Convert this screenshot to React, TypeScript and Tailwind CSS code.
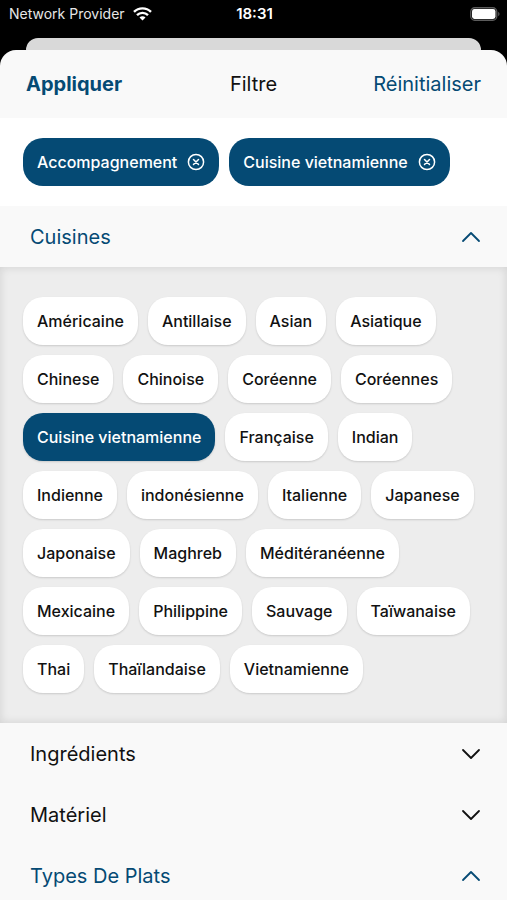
import { useState } from "react";
import clsx from "clsx";

const cuisines = [
  "Américaine", "Antillaise", "Asian", "Asiatique",
  "Chinese", "Chinoise", "Coréenne", "Coréennes",
  "Cuisine vietnamienne", "Française", "Indian",
  "Indienne", "indonésienne", "Italienne", "Japanese",
  "Japonaise", "Maghreb", "Méditéranéenne",
  "Mexicaine", "Philippine", "Sauvage", "Taïwanaise",
  "Thai", "Thaïlandaise", "Vietnamienne",
];

const sections: { title: string; items: string[] }[] = [
  { title: "Cuisines", items: cuisines },
  { title: "Ingrédients", items: [] },
  { title: "Matériel", items: [] },
  { title: "Types De Plats", items: [] },
];

const defaultFilters = ["Accompagnement", "Cuisine vietnamienne"];

function WifiIcon() {
  return (
    <svg width="19" height="14" viewBox="0 0 19 14" fill="none" stroke="white" strokeWidth="2.4" aria-hidden="true">
      <path d="M1 4.9a12 12 0 0 1 17 0" />
      <path d="M4 8.1a7.8 7.8 0 0 1 11 0" />
      <path d="M9.5 13.4 6.5 10.4a4.2 4.2 0 0 1 6 0Z" fill="white" stroke="none" />
    </svg>
  );
}

function BatteryIcon() {
  return (
    <svg width="30" height="14" viewBox="0 0 30 14" aria-hidden="true">
      <rect x="0.75" y="0.75" width="26" height="12.5" rx="4" fill="none" stroke="#5c5c5c" strokeWidth="1.3" />
      <rect x="2" y="2" width="23.5" height="10" rx="2.4" fill="white" />
      <path d="M28.2 4.8c1.8.7 1.8 3.7 0 4.4Z" fill="#5c5c5c" />
    </svg>
  );
}

function CloseIcon() {
  return (
    <svg width="18" height="18" viewBox="0 0 18 18" fill="none" stroke="currentColor" strokeWidth="1.5" strokeLinecap="round" aria-hidden="true">
      <circle cx="9" cy="9" r="7.6" />
      <path d="m6.5 6.5 5 5m0-5-5 5" />
    </svg>
  );
}

function Chevron({ open }: { open: boolean }) {
  return (
    <svg width="20" height="12" viewBox="0 0 20 12" fill="none" stroke="currentColor" strokeWidth="1.8" strokeLinecap="round" strokeLinejoin="round" aria-hidden="true">
      <path d={open ? "m2 10 8-8 8 8" : "m2 2 8 8 8-8"} />
    </svg>
  );
}

export default function App() {
  const [filters, setFilters] = useState<string[]>(defaultFilters);
  const [openSections, setOpenSections] = useState<string[]>(["Cuisines", "Types De Plats"]);

  function toggleFilter(name: string) {
    setFilters((prev) => (prev.includes(name) ? prev.filter((f) => f !== name) : [...prev, name]));
  }

  function toggleSection(title: string) {
    setOpenSections((prev) => (prev.includes(title) ? prev.filter((s) => s !== title) : [...prev, title]));
  }

  return (
    <div className="flex h-screen flex-col overflow-hidden bg-black font-['Inter',sans-serif] text-[#111111]">
      <div className="grid h-[38px] shrink-0 grid-cols-3 items-start pt-1 pr-[7px] pl-[9px] leading-5 text-white">
        <div className="flex h-5 items-center gap-2 text-sm whitespace-nowrap text-[#e6e6e6]">
          Network Provider
          <WifiIcon />
        </div>
        <div className="text-center text-[15px] font-semibold">18:31</div>
        <div className="flex h-5 items-center justify-end">
          <BatteryIcon />
        </div>
      </div>
      {/* card peeking out behind the sheet */}
      <div className="mx-[26px] h-3 shrink-0 rounded-t-xl bg-[#d9d9d9]" />

      <main className="min-h-0 flex-1 overflow-hidden rounded-t-2xl bg-[#f9f9f9]">
        <header className="grid h-[68px] grid-cols-[1fr_auto_1fr] items-center px-[26px] text-xl">
          <button className="justify-self-start font-bold text-[#054a74]">Appliquer</button>
          <h1>Filtre</h1>
          <button className="justify-self-end text-[#054a74]" onClick={() => setFilters([])}>Réinitialiser</button>
        </header>

        <div className="flex flex-wrap gap-2.5 bg-white py-5 pr-4 pl-[23px]">
          {filters.map((name) => (
            <button
              key={name}
              onClick={() => toggleFilter(name)}
              className="flex h-12 items-center gap-2.5 rounded-[20px] bg-[#054a74] px-3.5 text-base font-medium text-white"
            >
              {name}
              <CloseIcon />
            </button>
          ))}
        </div>

        {sections.map(({ title, items }) => {
          const open = openSections.includes(title);
          return (
            <section key={title}>
              <h2>
                <button
                  onClick={() => toggleSection(title)}
                  aria-expanded={open}
                  className={clsx("flex h-[61px] w-full items-center justify-between pr-[26px] pl-[30px] text-xl", open && "text-[#054a74]")}
                >
                  {title}
                  <Chevron open={open} />
                </button>
              </h2>
              {open && items.length > 0 && (
                <div className="flex flex-wrap gap-2.5 bg-[#ededed] py-[30px] pr-4 pl-[23px] shadow-[inset_0_0_10px_rgba(0,0,0,0.12)]">
                  {items.map((name) => (
                    <button
                      key={name}
                      onClick={() => toggleFilter(name)}
                      className={clsx(
                        "h-12 rounded-[20px] px-3.5 text-base font-medium shadow-[0_1px_2px_rgba(0,0,0,0.15)]",
                        filters.includes(name) ? "bg-[#054a74] text-white" : "bg-white"
                      )}
                    >
                      {name}
                    </button>
                  ))}
                </div>
              )}
            </section>
          );
        })}
      </main>
    </div>
  );
}
